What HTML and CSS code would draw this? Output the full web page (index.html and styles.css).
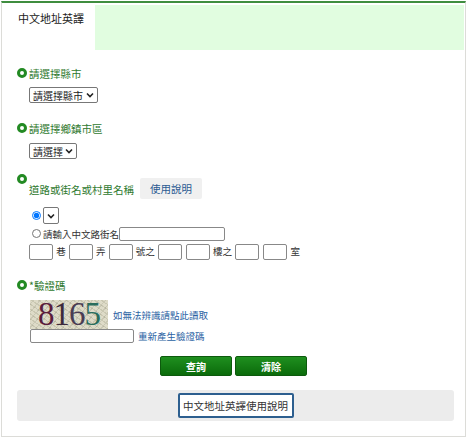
FILE: index.html
```html
<!DOCTYPE html>
<html lang="zh-Hant">
<head>
    <meta charset="utf-8" />
    <title>中文地址英譯</title>
    <link rel="stylesheet" href="styles.css">
</head>
<body>
<div class="panel">
    <div class="tabs">
        <div class="tab">中文地址英譯</div>
        <div class="tab-fill"></div>
    </div>

    <div class="content">
        <div class="field">
            <div class="label"><span class="ring"></span>請選擇縣市</div>
            <select class="sel city">
                <option>請選擇縣市</option>
            </select>
        </div>

        <div class="field">
            <div class="label"><span class="ring"></span>請選擇鄉鎮市區</div>
            <select class="sel town">
                <option>請選擇</option>
            </select>
        </div>

        <div class="field road">
            <div class="label label-road">
                <span class="ring"></span>
                <span class="road-text">道路或街名或村里名稱</span>
                <button class="help" type="button">使用說明</button>
            </div>
            <div class="opt">
                <input type="radio" name="road" checked>
                <select class="sel blank"><option></option></select>
            </div>
            <div class="opt opt2">
                <input type="radio" name="road">
                <span>請輸入中文路街名</span><input class="txt street" type="text">
            </div>
            <div class="addr">
                <input class="txt num" type="text"> 巷 <input class="txt num" type="text"> 弄 <input class="txt num" type="text"> 號之 <input class="txt num" type="text"> <input class="txt num" type="text"> 樓之 <input class="txt num" type="text"> <input class="txt num" type="text"> 室
            </div>
        </div>

        <div class="field captcha">
            <div class="label"><span class="ring"></span>*驗證碼</div>
            <div class="cap-row cap-first">
                <div class="cap-img"><span class="d1">8</span><span class="d2">1</span><span class="d3">6</span><span class="d4">5</span></div>
                <a class="link" href="#">如無法辨識請點此讀取</a>
            </div>
            <div class="cap-row">
                <input class="txt code" type="text">
                <a class="link" href="#">重新產生驗證碼</a>
            </div>
        </div>

        <div class="actions">
            <button class="go" type="button">查詢</button>
            <button class="go" type="button">清除</button>
        </div>

        <div class="guide">
            <button class="guide-btn" type="button">中文地址英譯使用說明</button>
        </div>
    </div>
</div>
</body>
</html>
```

FILE: styles.css
```css
body {
    margin: 0;
    font-family: "Noto Sans CJK TC", "Noto Sans", sans-serif;
    font-size: 10.5px;
    color: #333;
    background: #fff;
}

.panel {
    margin: 1px 4px 0 1px;
    height: 436px;
    border: 1px solid #dcdcd8;
    border-top: 2px solid #3f8d3f;
    box-sizing: border-box;
}

.tabs {
    display: flex;
    height: 47px;
}
.tab {
    width: 93px;
    box-sizing: border-box;
    padding: 7px 0 0 16px;
    font-size: 11px;
    color: #222;
}
.tab-fill {
    flex: 1;
    margin: 2px 1px 0 0;
    background: #e1fde0;
}

.content {
    padding: 15px 0 0 15px;
}

.label {
    display: flex;
    align-items: center;
    height: 16px;
    color: #2f7a2f;
    font-size: 10.5px;
}
.ring {
    width: 4px;
    height: 4px;
    border: 3px solid #238a23;
    border-radius: 50%;
    margin-right: 2px;
    flex: none;
}

.sel {
    display: block;
    height: 16px;
    margin: 6px 0 0 12px;
    padding: 0 13px 0 3px;
    font-family: inherit;
    font-size: 10px;
    color: #222;
    border: 1px solid #777;
    border-radius: 2px;
    appearance: none;
    -webkit-appearance: none;
    background: #fff url("data:image/svg+xml,%3Csvg xmlns='http://www.w3.org/2000/svg' width='8' height='6' viewBox='0 0 8 6'%3E%3Cpath d='M1 1.5l3 3 3-3' fill='none' stroke='%23222' stroke-width='1.6'/%3E%3C/svg%3E") no-repeat right 3px center;
}
.city { width: 69px; }
.town { width: 48px; margin-top: 7px; }

.field + .field { margin-top: 17px; }
.field.road { margin-top: 19px; }

.label-road {
    align-items: flex-start;
    height: 21px;
}
.label-road .ring {
    margin-top: -4px;
}
.road-text {
    margin-top: 4px;
    margin-right: 6px;
}
.help {
    height: 21px;
    padding: 0 10px;
    border: none;
    border-radius: 2px;
    background: #f0f0f0;
    color: #2b5b92;
    font-family: inherit;
    font-size: 10.5px;
}

.opt {
    display: flex;
    align-items: center;
    margin: 8px 0 0 14px;
    font-size: 9.5px;
}
.opt input[type=radio] {
    width: 9px;
    height: 9px;
    margin: 0 2px 0 1px;
}
.opt .blank {
    width: 16px;
    height: 17px;
    margin: 0;
    padding: 0;
    background-position: center;
}
.opt2 {
    margin-top: 2px;
    height: 15px;
}
.txt {
    height: 14px;
    box-sizing: border-box;
    border: 1px solid #888;
    border-radius: 2px;
    padding: 0 2px;
    font-size: 10px;
    vertical-align: middle;
}
.street {
    width: 106px;
    height: 14px;
}
.addr {
    margin: 3px 0 0 11px;
    font-size: 9.5px;
}
.num {
    width: 24px;
    height: 16px;
    margin: 0 1px;
}

.field.captcha { margin-top: 17px; }
.cap-row {
    display: flex;
    align-items: center;
    margin-left: 13px;
}
.cap-first { margin-top: 7px; }
.cap-img {
    width: 78px;
    height: 29px;
    background:
        repeating-linear-gradient(35deg, rgba(140,140,110,0.25) 0 1px, transparent 1px 4px),
        repeating-linear-gradient(-50deg, rgba(120,120,100,0.2) 0 1px, transparent 1px 5px),
        #dedbc8;
    font-family: "Liberation Serif", serif;
    font-size: 33px;
    line-height: 29px;
    text-align: center;
    letter-spacing: -1px;
    margin-right: 5px;
}
.d1 { color: #5b1d3d; }
.d2 { color: #3c2a3c; }
.d3 { color: #4a3d54; }
.d4 { color: #2a6d5d; }
.link {
    color: #2a62a3;
    text-decoration: none;
    font-size: 9.5px;
}
.code {
    width: 104px;
    height: 14px;
    margin-right: 4px;
}

.actions {
    display: flex;
    justify-content: center;
    gap: 3px;
    margin: 13px 0 0 -15px;
}
.go {
    width: 72px;
    height: 20px;
    border: 1px solid #0d5a0d;
    border-radius: 2px;
    background: linear-gradient(#1f8f1f, #0b6b0b);
    color: #fff;
    font-family: inherit;
    font-size: 10px;
    font-weight: bold;
}

.guide {
    display: flex;
    justify-content: center;
    align-items: center;
    height: 31px;
    margin: 14px 11px 0 0;
    background: #ececec;
    border-radius: 3px;
}
.guide-btn {
    width: 116px;
    height: 25px;
    padding: 0;
    white-space: nowrap;
    border: 2px solid #2d5f8f;
    border-radius: 2px;
    background: #fff;
    color: #333;
    font-family: inherit;
    font-size: 10.5px;
}
```
